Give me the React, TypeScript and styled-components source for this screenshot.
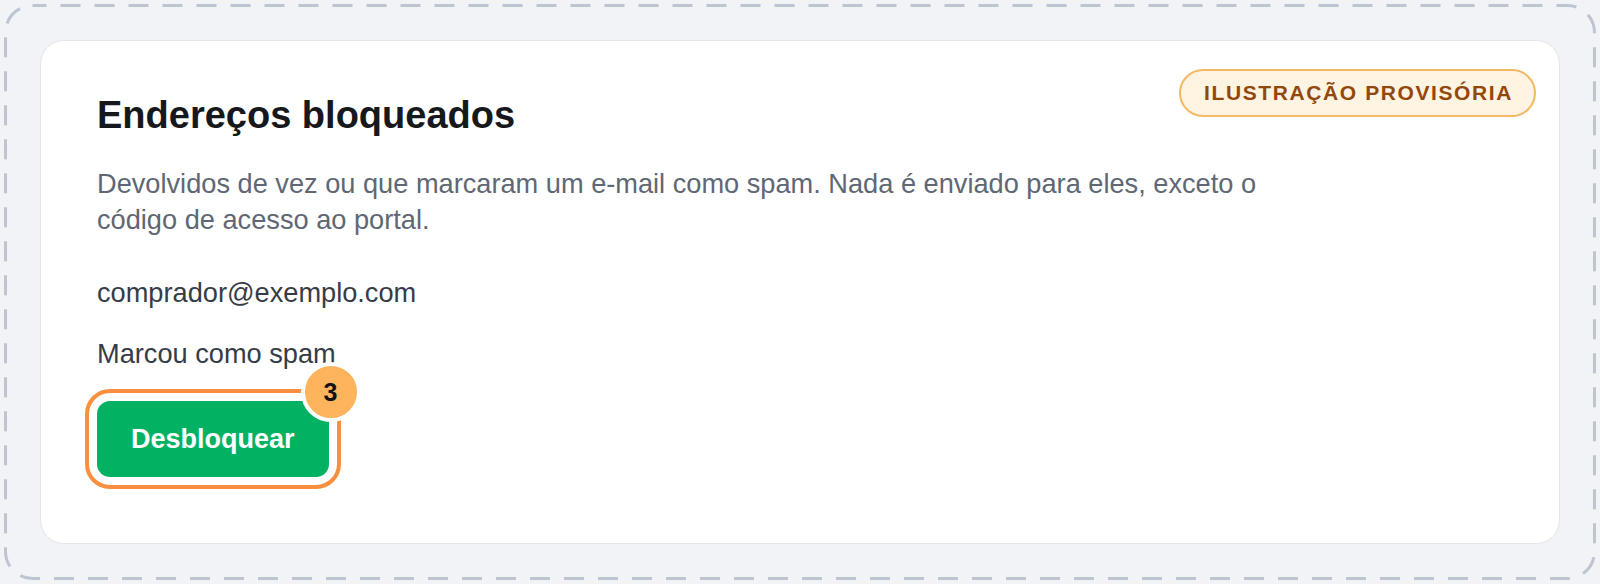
import React from "react";
import styled, { createGlobalStyle } from "styled-components";

const Global = createGlobalStyle`
  html, body {
    margin: 0;
    padding: 0;
    background: #f1f3f7;
  }
  body {
    font-family: "Liberation Sans", Arial, Helvetica, sans-serif;
    -webkit-font-smoothing: antialiased;
  }
  * { box-sizing: border-box; }
`;

const Frame = styled.div`
  padding: 4px;
  height: 584px;
`;

const Dashed = styled.div`
  position: relative;
  height: 100%;
  border-radius: 28px;
  padding: 36px;
`;

const DashOutline = styled.svg`
  position: absolute;
  inset: 0;
  width: 100%;
  height: 100%;
  overflow: visible;
  pointer-events: none;

  rect {
    x: 1.5px;
    y: 1.5px;
    width: calc(100% - 3px);
    height: calc(100% - 3px);
    rx: 27px;
    fill: none;
    stroke: #bec4d0;
    stroke-width: 3px;
    stroke-dasharray: 20 14;
    stroke-dashoffset: 6;
  }
`;

const Card = styled.section`
  position: relative;
  height: 100%;
  background: #ffffff;
  border: 1px solid #e3e6eb;
  border-radius: 24px;
  padding: 55px 56px 0 56px;
  display: flex;
  flex-direction: column;
  align-items: flex-start;
`;

const Pill = styled.span`
  position: absolute;
  top: 28px;
  right: 23px;
  height: 48px;
  display: inline-flex;
  align-items: center;
  padding: 0 21px 0 23px;
  border: 2px solid #f4b866;
  border-radius: 999px;
  background: #fff3e1;
  color: #92470b;
  font-size: 21px;
  font-weight: 700;
  letter-spacing: 1.6px;
  text-transform: uppercase;
`;

const Title = styled.h2`
  margin: 0;
  font-size: 38px;
  line-height: 1;
  font-weight: 700;
  color: #16181c;
`;

const Description = styled.p`
  margin: 32px 0 0 0;
  max-width: 1200px;
  font-size: 27.2px;
  line-height: 36px;
  color: #5f6775;
`;

const Line = styled.p<{ $gap: number }>`
  margin: ${(p) => p.$gap}px 0 0 0;
  font-size: 27.2px;
  line-height: 36px;
  color: #363c47;
`;

const ActionWrap = styled.div`
  position: relative;
  margin-top: 29px;
`;

const UnblockButton = styled.button`
  height: 76px;
  padding: 0 34px;
  border: none;
  border-radius: 13px;
  background: #02b262;
  color: #ffffff;
  font-family: inherit;
  font-size: 27px;
  font-weight: 700;
  cursor: pointer;
  outline: 4px solid #f98f3f;
  outline-offset: 8px;
`;

const Step = styled.span`
  position: absolute;
  top: -39px;
  right: -32px;
  width: 60px;
  height: 60px;
  border-radius: 50%;
  border: 4px solid #ffffff;
  background: #fdb45c;
  color: #111214;
  font-size: 25px;
  font-weight: 700;
  display: flex;
  align-items: center;
  justify-content: center;
`;

export default function App() {
  return (
    <>
      <Global />
      <Frame>
        <Dashed>
          <DashOutline aria-hidden="true">
            <rect />
          </DashOutline>
          <Card>
            <Pill>Ilustração provisória</Pill>
            <Title>Endereços bloqueados</Title>
            <Description>
              Devolvidos de vez ou que marcaram um e-mail como spam. Nada é
              enviado para eles, exceto o código de acesso ao portal.
            </Description>
            <Line $gap={37}>comprador@exemplo.com</Line>
            <Line $gap={25}>Marcou como spam</Line>
            <ActionWrap>
              <UnblockButton>Desbloquear</UnblockButton>
              <Step>3</Step>
            </ActionWrap>
          </Card>
        </Dashed>
      </Frame>
    </>
  );
}
